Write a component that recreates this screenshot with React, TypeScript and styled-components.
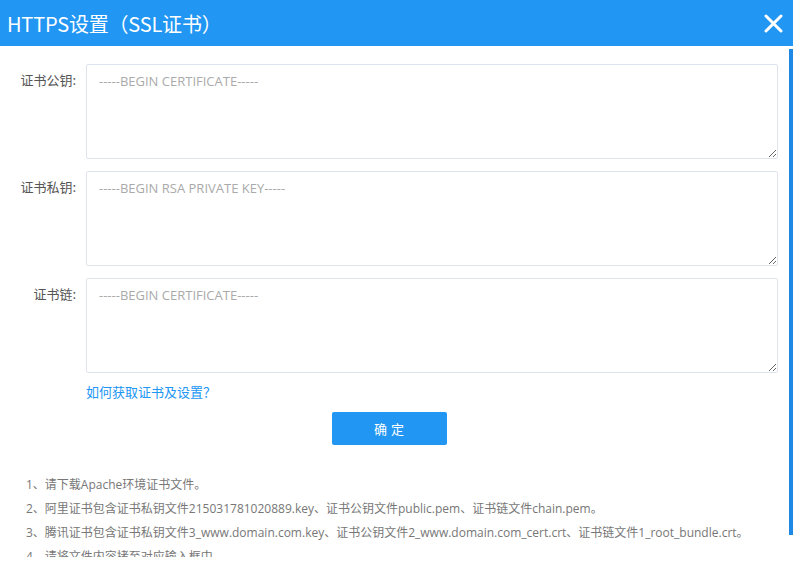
import { FC } from 'react';
import styled, { createGlobalStyle } from 'styled-components';

const COLOR_BLUE = '#2196f3';
const FONT = `'Segoe UI', 'Open Sans', 'Noto Sans CJK SC', sans-serif`;

const GlobalStyle = createGlobalStyle`
  html, body {
    margin: 0;
    padding: 0;
    overflow: hidden;
    background: #fff;
    font-family: ${FONT};
  }
`;

const StyledDialog = styled.div`
  width: 100vw;
  height: 100vh;
  box-sizing: border-box;
  padding-bottom: 8px;
  display: flex;
  flex-direction: column;
  position: relative;
`;

const StyledHeader = styled.header`
  height: 46px;
  flex-shrink: 0;
  background: ${COLOR_BLUE};
  display: flex;
  align-items: center;
  justify-content: space-between;
  padding: 0 9px 0 7px;
`;

const StyledTitle = styled.h1`
  margin: 0;
  color: #fff;
  font-size: 20px;
  font-weight: 400;
  font-family: 'Noto Sans CJK SC', sans-serif;
  letter-spacing: -0.2px;
`;

const StyledClose = styled.button`
  border: 0;
  background: transparent;
  padding: 0;
  width: 22px;
  height: 22px;
  cursor: pointer;
  display: flex;
  align-items: center;
  justify-content: center;
`;

const StyledBody = styled.div`
  flex: 1;
  overflow-y: auto;
  padding: 18px 15px 26px 0;
`;

/* scroll thumb drawn over the right edge of the body */
const StyledScrollThumb = styled.div`
  position: absolute;
  right: 0;
  top: 49px;
  width: 4px;
  height: 486px;
  background: #1e88e5;
`;

const StyledRow = styled.div`
  display: flex;
  align-items: flex-start;
  margin-bottom: 12px;
`;

const StyledLabel = styled.label`
  width: 76px;
  flex-shrink: 0;
  padding-right: 10px;
  text-align: right;
  font-size: 13px;
  line-height: 18px;
  padding-top: 7px;
  color: #555;
  font-family: 'Noto Sans CJK SC', sans-serif;
  box-sizing: content-box;
`;

const StyledTextarea = styled.textarea`
  flex: 1;
  height: 95px;
  box-sizing: border-box;
  border: 1px solid #dfe3ee;
  border-radius: 2px;
  padding: 7px 12px;
  font-size: 13px;
  line-height: 18px;
  font-family: ${FONT};
  color: #333;
  resize: vertical;
  outline: none;
  &::placeholder {
    color: #aaa;
  }
`;

const StyledHelpLink = styled.a`
  display: block;
  width: max-content;
  margin: -2px 0 0 86px;
  font-size: 13px;
  line-height: 18px;
  color: ${COLOR_BLUE};
  text-decoration: none;
  font-family: 'Noto Sans CJK SC', sans-serif;
`;

const StyledActions = styled.div`
  display: flex;
  justify-content: center;
  padding-top: 11px;
`;

const StyledButton = styled.button`
  width: 115px;
  height: 33px;
  border: 0;
  border-radius: 2px;
  background: ${COLOR_BLUE};
  color: #fff;
  font-size: 13px;
  font-family: 'Noto Sans CJK SC', sans-serif;
  letter-spacing: 4px;
  text-indent: 4px;
  cursor: pointer;
`;

const StyledNotes = styled.ol`
  list-style: none;
  margin: 28px 0 0;
  padding: 0 0 0 26px;
`;

const StyledNote = styled.li`
  font-size: 12px;
  line-height: 24px;
  color: #777;
  white-space: nowrap;
`;

const fields = [
  { label: '证书公钥:', placeholder: '-----BEGIN CERTIFICATE-----' },
  { label: '证书私钥:', placeholder: '-----BEGIN RSA PRIVATE KEY-----' },
  { label: '证书链:', placeholder: '-----BEGIN CERTIFICATE-----' },
];

const notes = [
  '1、请下载Apache环境证书文件。',
  '2、阿里证书包含证书私钥文件215031781020889.key、证书公钥文件public.pem、证书链文件chain.pem。',
  '3、腾讯证书包含证书私钥文件3_www.domain.com.key、证书公钥文件2_www.domain.com_cert.crt、证书链文件1_root_bundle.crt。',
  '4、请将文件内容拷至对应输入框中。',
];

const App: FC = () => {
  return (
    <>
      <GlobalStyle />
      <StyledDialog>
        <StyledHeader>
          <StyledTitle>HTTPS设置（SSL证书）</StyledTitle>
          <StyledClose aria-label='close'>
            <svg width='19' height='19' viewBox='0 0 19 19'>
              <path
                d='M2 2 L17 17 M17 2 L2 17'
                stroke='#fff'
                strokeWidth='3'
                strokeLinecap='round'
              />
            </svg>
          </StyledClose>
        </StyledHeader>
        <StyledBody>
          {fields.map((field, i) => (
            <StyledRow key={i}>
              <StyledLabel>{field.label}</StyledLabel>
              <StyledTextarea placeholder={field.placeholder} />
            </StyledRow>
          ))}
          <StyledHelpLink href='#'>如何获取证书及设置？</StyledHelpLink>
          <StyledActions>
            <StyledButton>确定</StyledButton>
          </StyledActions>
          <StyledNotes>
            {notes.map((note, i) => (
              <StyledNote key={i}>{note}</StyledNote>
            ))}
          </StyledNotes>
        </StyledBody>
        <StyledScrollThumb />
      </StyledDialog>
    </>
  );
};

export default App;
